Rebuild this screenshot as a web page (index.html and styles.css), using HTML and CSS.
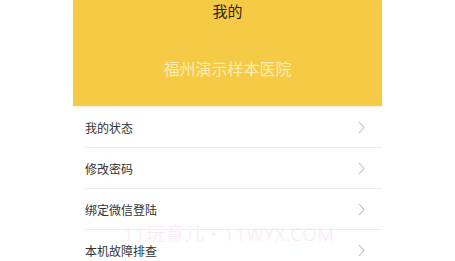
FILE: index.html
```html
<!DOCTYPE html>
<html lang="zh">
<head>
<meta charset="utf-8">
<link rel="stylesheet" href="styles.css">
</head>
<body>
<div class="phone">
  <header class="header">
    <div class="title">我的</div>
    <div class="hospital">福州演示样本医院</div>
  </header>
  <ul class="menu">
    <li class="row"><span class="label">我的状态</span><svg class="chev" width="7" height="13" viewBox="0 0 7 13"><path d="M1 1 L6 6.5 L1 12" fill="none" stroke="#bdbdbd" stroke-width="1.1"/></svg></li>
    <li class="row"><span class="label">修改密码</span><svg class="chev" width="7" height="13" viewBox="0 0 7 13"><path d="M1 1 L6 6.5 L1 12" fill="none" stroke="#bdbdbd" stroke-width="1.1"/></svg></li>
    <li class="row"><span class="label">绑定微信登陆</span><svg class="chev" width="7" height="13" viewBox="0 0 7 13"><path d="M1 1 L6 6.5 L1 12" fill="none" stroke="#bdbdbd" stroke-width="1.1"/></svg></li>
    <li class="row"><span class="label">本机故障排查</span><svg class="chev" width="7" height="13" viewBox="0 0 7 13"><path d="M1 1 L6 6.5 L1 12" fill="none" stroke="#bdbdbd" stroke-width="1.1"/></svg></li>
  </ul>
  <div class="watermark">11玩意儿 • 11WYX.COM</div>
</div>
</body>
</html>
```

FILE: styles.css
```css
html, body {
  margin: 0;
  padding: 0;
  background: #ffffff;
}
body {
  font-family: "Noto Sans CJK SC", "Noto Sans", sans-serif;
  overflow: hidden;
  height: 261px;
}
.phone {
  position: relative;
  width: 309px;
  margin: 0 auto;
  background: #ffffff;
}
.header {
  height: 106px;
  background: #f5ca45;
  display: flex;
  flex-direction: column;
  align-items: center;
  box-shadow: 0 1px 2px rgba(245, 202, 69, 0.25);
}
.title {
  font-size: 15px;
  line-height: 22px;
  color: #2a2418;
}
.hospital {
  margin-top: 35px;
  font-size: 16px;
  line-height: 22px;
  color: #fcecb8;
}
.menu {
  list-style: none;
  margin: 1px 0 0 0;
  padding: 0;
}
.row {
  margin-left: 11px;
  height: 40px;
  border-bottom: 1px solid #ededed;
  display: flex;
  align-items: center;
  justify-content: space-between;
  padding-right: 17px;
}
.label {
  font-size: 12px;
  color: #333333;
  padding-left: 1px;
}
.chev {
  display: block;
}
.watermark {
  position: absolute;
  left: 50px;
  top: 224px;
  font-family: "Noto Sans", "Noto Sans CJK SC", sans-serif;
  font-weight: 300;
  font-size: 19px;
  line-height: 20px;
  color: #fde8f4;
  white-space: nowrap;
  letter-spacing: 0.6px;
}
```
